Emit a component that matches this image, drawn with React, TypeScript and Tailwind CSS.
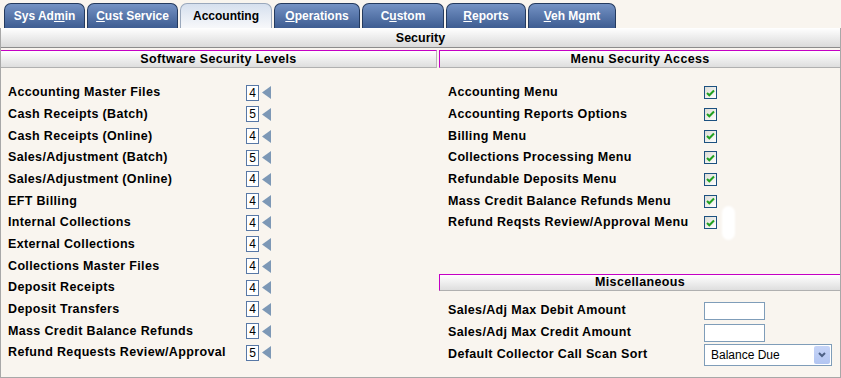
import React from "react";

const tabs = [
  { label: "Sys Admin", key: 6, w: 81 },
  { label: "Cust Service", key: 0, w: 91 },
  { label: "Accounting", key: -1, w: 92, active: true },
  { label: "Operations", key: 0, w: 86 },
  { label: "Custom", key: 1, w: 82 },
  { label: "Reports", key: 0, w: 80 },
  { label: "Veh Mgmt", key: 0, w: 88 },
];

const levels: [string, number][] = [
  ["Accounting Master Files", 4],
  ["Cash Receipts (Batch)", 5],
  ["Cash Receipts (Online)", 4],
  ["Sales/Adjustment (Batch)", 5],
  ["Sales/Adjustment (Online)", 4],
  ["EFT Billing", 4],
  ["Internal Collections", 4],
  ["External Collections", 4],
  ["Collections Master Files", 4],
  ["Deposit Receipts", 4],
  ["Deposit Transfers", 4],
  ["Mass Credit Balance Refunds", 4],
  ["Refund Requests Review/Approval", 5],
];

const menus = [
  "Accounting Menu",
  "Accounting Reports Options",
  "Billing Menu",
  "Collections Processing Menu",
  "Refundable Deposits Menu",
  "Mass Credit Balance Refunds Menu",
  "Refund Reqsts Review/Approval Menu",
];

const Tab = ({ label, keyIdx, w, active }: { label: string; keyIdx: number; w: number; active?: boolean }) => (
  <div
    style={{ width: w }}
    className={
      active
        ? "h-[25px] rounded-t-[7px] border border-b-0 border-[#9aa8bc] bg-gradient-to-b from-[#d6e0ee] to-[#f7f8fa] flex items-center justify-center text-[12px] font-bold text-black"
        : "h-[25px] rounded-t-[7px] border border-b-0 border-[#243a5e] bg-gradient-to-b from-[#7492c4] to-[#3e5d92] flex items-center justify-center text-[12px] font-bold text-white"
    }
  >
    {keyIdx < 0 ? (
      label
    ) : (
      <span>
        {label.slice(0, keyIdx)}
        <span className="underline">{label[keyIdx]}</span>
        {label.slice(keyIdx + 1)}
      </span>
    )}
  </div>
);

const LevelBox = ({ n }: { n: number }) => (
  <div className="flex items-center gap-[3px]">
    <div className="w-[13px] h-[16px] border border-[#5878a6] bg-white flex items-center justify-center text-[12px] leading-none text-black font-normal">
      {n}
    </div>
    <svg width="9" height="13" viewBox="0 0 9 13">
      <polygon points="9,0 9,13 0,6.5" fill="#7d98b6" />
    </svg>
  </div>
);

const Check = () => (
  <div className="w-[13px] h-[13px] border border-[#1c5180] bg-gradient-to-br from-[#dcdcd6] to-white flex items-center justify-center">
    <svg width="9" height="8" viewBox="0 0 9 8">
      <path d="M1 4 L3.3 6.3 L8 1.5" stroke="#21a121" strokeWidth="2" fill="none" />
    </svg>
  </div>
);

export default function App() {
  return (
    <div className="w-[841px] h-[378px] bg-[#f9f5ef] font-['Liberation_Sans',Arial,sans-serif] relative overflow-hidden">
      {/* tabs */}
      <div className="h-[28px] pt-[2px] pl-[4px] flex gap-[2px] items-end">
        {tabs.map((t) => (
          <Tab key={t.label} label={t.label} keyIdx={t.key} w={t.w} active={t.active} />
        ))}
      </div>

      <div className="h-[350px] border-l border-r border-b border-[#a8a8a8] flex flex-col">
        {/* security bar */}
        <div className="h-[20px] bg-gradient-to-b from-white to-[#dadada] border-b border-[#8c8c8c] flex items-center justify-center text-[12.5px] font-bold text-black pt-[2px]">
          Security
        </div>

        <div className="flex mt-[2px] flex-1">
          {/* left panel */}
          <div className="w-[436px] flex flex-col">
            <div className="h-[18px] border-t border-[#c400c4] border-b border-r border-b-[#b0b0b0] border-r-[#b8b8b8] bg-gradient-to-b from-white to-[#dedede] flex items-center justify-center text-[12.5px] font-bold text-black tracking-[0.35px]">
              Software Security Levels
            </div>
            <div className="pt-[14px] pl-[7px]">
              {levels.map(([label, n]) => (
                <div key={label} className="h-[21.67px] flex items-center">
                  <div className="w-[238px] text-[12.5px] font-bold text-black tracking-[0.35px]">{label}</div>
                  <LevelBox n={n} />
                </div>
              ))}
            </div>
          </div>

          {/* right panel */}
          <div className="flex-1 ml-[2px] flex flex-col">
            <div className="h-[18px] border-t border-l border-[#c400c4] border-b border-b-[#b0b0b0] bg-gradient-to-b from-white to-[#dedede] flex items-center justify-center text-[12.5px] font-bold text-black tracking-[0.35px]">
              Menu Security Access
            </div>
            <div className="pt-[14px] pl-[9px]">
              {menus.map((m) => (
                <div key={m} className="h-[21.67px] flex items-center">
                  <div className="w-[256px] text-[12.5px] font-bold text-black tracking-[0.35px]">{m}</div>
                  <Check />
                </div>
              ))}
            </div>

            <div className="mt-[40px] h-[17px] border-t border-l border-[#c400c4] border-b border-b-[#b0b0b0] bg-gradient-to-b from-white to-[#dedede] flex items-center justify-center text-[12.5px] font-bold text-black tracking-[0.35px]">
              Miscellaneous
            </div>
            <div className="pt-[9px] pl-[9px]">
              <div className="h-[22px] flex items-center">
                <div className="w-[256px] text-[12.5px] font-bold text-black tracking-[0.35px]">Sales/Adj Max Debit Amount</div>
                <div className="w-[61px] h-[18px] border border-[#7f9db9] bg-white" />
              </div>
              <div className="h-[22px] flex items-center">
                <div className="w-[256px] text-[12.5px] font-bold text-black tracking-[0.35px]">Sales/Adj Max Credit Amount</div>
                <div className="w-[61px] h-[18px] border border-[#7f9db9] bg-white" />
              </div>
              <div className="h-[22px] flex items-center">
                <div className="w-[256px] text-[12.5px] font-bold text-black tracking-[0.35px]">Default Collector Call Scan Sort</div>
                <div className="w-[128px] h-[22px] border border-[#7f9db9] bg-white flex items-center justify-between pl-[6px] pr-[1px]">
                  <span className="text-[12px] text-black">Balance Due</span>
                  <div className="w-[16px] h-[18px] bg-gradient-to-b from-[#c6d4f7] to-[#b2c5f1] rounded-[2px] flex items-center justify-center">
                    <svg width="8" height="6" viewBox="0 0 8 6">
                      <path d="M1 1 L4 4 L7 1" stroke="#4d6185" strokeWidth="2" fill="none" />
                    </svg>
                  </div>
                </div>
              </div>
            </div>
          </div>
        </div>
      </div>

      {/* stray white smudge */}
      <div className="absolute left-[722px] top-[206px] w-[13px] h-[34px] rounded-full bg-white blur-[1px]" />
    </div>
  );
}
